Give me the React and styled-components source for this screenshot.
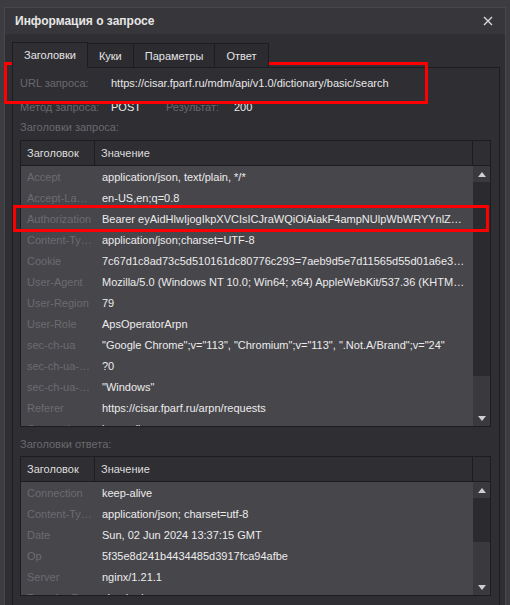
import styled, { createGlobalStyle } from "styled-components"

const Global = createGlobalStyle`
  html, body {
    margin: 0;
    padding: 0;
    background: #3d3c41;
    font-family: "Liberation Sans", Arial, sans-serif;
    font-size: 11px;
  }
  * {
    box-sizing: border-box;
  }
`

const Page = styled.div`
  position: relative;
  width: 510px;
  height: 605px;
  overflow: hidden;
  padding: 7px 4px 0 4px;
`

const Dialog = styled.div`
  border: 1px solid #48474c;
  border-bottom: none;
  background: #2f2e33;
  height: 620px;
`

const TitleBar = styled.div`
  height: 26px;
  background: #37363b;
  display: flex;
  align-items: center;
  justify-content: space-between;
  padding: 0 12px 0 10px;
`

const Title = styled.div`
  color: #e6e6e6;
  font-weight: 700;
  font-size: 12px;
`

const Close = styled.div`
  width: 10px;
  height: 10px;
  display: flex;
`

const Body = styled.div`
  padding: 7px 5px 0 7px;
`

const Tabs = styled.div`
  display: flex;
  align-items: flex-end;
  height: 26px;
`

const Tab = styled.div`
  height: ${(p) => (p.$active ? "26px" : "25px")};
  padding: 0 11px;
  display: flex;
  align-items: center;
  color: #e4e4e4;
  background: ${(p) => (p.$active ? "#2f2e33" : "#2c2b30")};
  border: 1px solid #1d1c20;
  border-left: ${(p) => (p.$first ? "1px solid #1d1c20" : "none")};
  border-bottom: ${(p) => (p.$active ? "1px solid #2f2e33" : "1px solid #1d1c20")};
  margin-bottom: -1px;
  position: relative;
  z-index: 1;
`

const Panel = styled.div`
  border: 1px solid #1d1c20;
  padding: 5px 8px 0 7px;
  height: 560px;
`

const InfoRow = styled.div`
  display: flex;
  line-height: 20px;
  margin-top: ${(p) => p.$mt || 0}px;
`

const Label = styled.span`
  color: #6a696e;
  width: ${(p) => p.$w || 91}px;
  flex-shrink: 0;
`

const Value = styled.span`
  color: #e8e8e8;
  width: ${(p) => (p.$w ? p.$w + "px" : "auto")};
`

const SectionLabel = styled.div`
  color: #6a696e;
  line-height: 20px;
  margin-top: ${(p) => p.$mt || 0}px;
`

const Table = styled.div`
  width: 471px;
  border: 1px solid #1d1c20;
  margin-top: ${(p) => p.$mt || 0}px;
  background: #2f2e33;
`

const HeadRow = styled.div`
  display: grid;
  grid-template-columns: 74px 378px 17px;
  height: 25px;
  border-bottom: 1px solid #1d1c20;
`

const HeadCell = styled.div`
  display: flex;
  align-items: center;
  padding-left: 6px;
  color: #dedede;
  border-right: ${(p) => (p.$last ? "none" : "1px solid #1d1c20")};
`

const TableBody = styled.div`
  display: grid;
  grid-template-columns: 452px 17px;
  height: ${(p) => p.$h}px;
  overflow: hidden;
`

const Rows = styled.div`
  background: #47464b;
  overflow: hidden;
`

const Row = styled.div`
  display: grid;
  grid-template-columns: 74px 378px;
  height: 21px;
  align-items: center;
`

const Key = styled.div`
  color: #6c6b70;
  padding: 0 2px 0 6px;
  white-space: nowrap;
  overflow: hidden;
  text-overflow: ellipsis;
`

const Val = styled.div`
  color: #ececec;
  padding: 0 6px 0 7px;
  white-space: nowrap;
  overflow: hidden;
  text-overflow: ellipsis;
`

const Scrollbar = styled.div`
  display: flex;
  flex-direction: column;
  background: #3a393e;
`

const ScrollButton = styled.div`
  height: 16px;
  display: flex;
  align-items: center;
  justify-content: center;
  flex-shrink: 0;
`

const Arrow = styled.div`
  width: 0;
  height: 0;
  border-left: 4px solid transparent;
  border-right: 4px solid transparent;
  ${(p) =>
    p.$down
      ? "border-top: 5px solid #cfcfcf;"
      : "border-bottom: 5px solid #cfcfcf;"}
`

const Thumb = styled.div`
  height: ${(p) => p.$h}px;
  background: #2b2a2f;
  flex-shrink: 0;
`

const Spacer = styled.div`
  flex: 1;
`

const Highlight = styled.div`
  position: absolute;
  left: ${(p) => p.$x}px;
  top: ${(p) => p.$y}px;
  width: ${(p) => p.$w}px;
  height: ${(p) => p.$h}px;
  border: 3px solid #ff0000;
  pointer-events: none;
`

const requestHeaders = [
  ["Accept", "application/json, text/plain, */*"],
  ["Accept-Language", "en-US,en;q=0.8"],
  ["Authorization", "Bearer eyAidHlwIjogIkpXVCIsICJraWQiOiAiakF4ampNUlpWbWRYYnlZRldJOiIsICJhbGciOiAiUlMyNTYi"],
  ["Content-Type", "application/json;charset=UTF-8"],
  ["Cookie", "7c67d1c8ad73c5d510161dc80776c293=7aeb9d5e7d11565d55d01a6e3986a1b2c"],
  ["User-Agent", "Mozilla/5.0 (Windows NT 10.0; Win64; x64) AppleWebKit/537.36 (KHTML, like Gecko) Chrome/113.0"],
  ["User-Region", "79"],
  ["User-Role", "ApsOperatorArpn"],
  ["sec-ch-ua", "\"Google Chrome\";v=\"113\", \"Chromium\";v=\"113\", \".Not.A/Brand\";v=\"24\""],
  ["sec-ch-ua-mobile", "?0"],
  ["sec-ch-ua-platform", "\"Windows\""],
  ["Referer", "https://cisar.fparf.ru/arpn/requests"],
  ["Connection", "keep-alive"],
]

const responseHeaders = [
  ["Connection", "keep-alive"],
  ["Content-Type", "application/json; charset=utf-8"],
  ["Date", "Sun, 02 Jun 2024 13:37:15 GMT"],
  ["Op", "5f35e8d241b4434485d3917fca94afbe"],
  ["Server", "nginx/1.21.1"],
  ["Transfer-Encoding", "chunked"],
]

const HeaderTable = ({ rows, height, thumb, mt }) => {
  return (
    <Table $mt={mt}>
      <HeadRow>
        <HeadCell>Заголовок</HeadCell>
        <HeadCell>Значение</HeadCell>
        <HeadCell $last />
      </HeadRow>
      <TableBody $h={height}>
        <Rows>
          {rows.map(([k, v]) => (
            <Row key={k}>
              <Key>{k}</Key>
              <Val>{v}</Val>
            </Row>
          ))}
        </Rows>
        <Scrollbar>
          <ScrollButton>
            <Arrow />
          </ScrollButton>
          <Thumb $h={thumb} />
          <Spacer />
          <ScrollButton>
            <Arrow $down />
          </ScrollButton>
        </Scrollbar>
      </TableBody>
    </Table>
  )
}

const App = () => {
  return (
    <Page>
      <Global />
      <Dialog>
        <TitleBar>
          <Title>Информация о запросе</Title>
          <Close>
            <svg width="10" height="10" viewBox="0 0 10 10">
              <path d="M1 1 L9 9 M9 1 L1 9" stroke="#d8d8d8" strokeWidth="1.4" />
            </svg>
          </Close>
        </TitleBar>
        <Body>
          <Tabs>
            <Tab $active $first>Заголовки</Tab>
            <Tab>Куки</Tab>
            <Tab>Параметры</Tab>
            <Tab>Ответ</Tab>
          </Tabs>
          <Panel>
            <InfoRow>
              <Label>URL запроса:</Label>
              <Value>https://cisar.fparf.ru/mdm/api/v1.0/dictionary/basic/search</Value>
            </InfoRow>
            <InfoRow $mt={4}>
              <Label>Метод запроса:</Label>
              <Value $w={55}>POST</Value>
              <Label $w={68}>Результат:</Label>
              <Value>200</Value>
            </InfoRow>
            <SectionLabel>Заголовки запроса:</SectionLabel>
            <HeaderTable rows={requestHeaders} height={260} thumb={194} mt={3} />
            <SectionLabel $mt={7}>Заголовки ответа:</SectionLabel>
            <HeaderTable rows={responseHeaders} height={113} thumb={44} mt={2} />
          </Panel>
        </Body>
      </Dialog>
      <Highlight $x={4} $y={62} $w={424} $h={42} />
      <Highlight $x={13} $y={205} $w={476} $h={27} />
    </Page>
  )
}

export default App
